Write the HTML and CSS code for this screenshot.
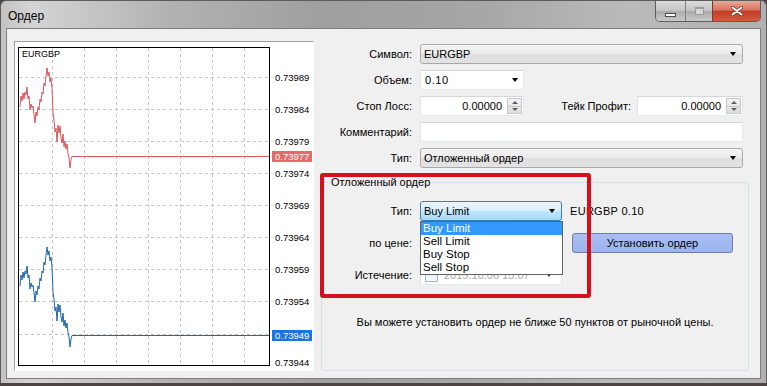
FILE: index.html
```html
<!DOCTYPE html>
<html lang="ru">
<head>
  <meta charset="UTF-8">
  <title>Ордер</title>
  <link rel="stylesheet" href="styles.css">
</head>
<body>

  <div class="window">
    <div class="titlebar">
      <span class="title">Ордер</span>
      <div class="caption-buttons">
        <span class="cap-btn cap-min"><i></i></span>
        <span class="cap-btn cap-max"><i></i></span>
        <span class="cap-btn cap-close">
          <svg width="12" height="10" viewBox="0 0 12 10">
            <path d="M1.5 1.5 L10.5 8.5 M10.5 1.5 L1.5 8.5" stroke="#6b2a1e" stroke-width="3.4" stroke-linecap="round"/>
            <path d="M1.5 1.5 L10.5 8.5 M10.5 1.5 L1.5 8.5" stroke="#fff" stroke-width="2" stroke-linecap="round"/>
          </svg>
        </span>
      </div>
    </div>

    <div class="client">
      <!-- график -->
      <div class="chart-panel">
        <svg class="chart" width="298" height="328" viewBox="15 42 298 328">
          <rect x="15" y="42" width="298" height="328" fill="#fff"/>
          <g stroke="#c4c4c4" stroke-dasharray="3 3" stroke-width="1">
            <path d="M52.5 48V366 M84.5 48V366 M116.5 48V366 M148.5 48V366 M180.5 48V366 M212.5 48V366 M244.5 48V366"/>
            <path d="M19 77.5H270 M19 109.5H270 M19 141.5H270 M19 173.5H270 M19 205.5H270 M19 237.5H270 M19 269.5H270 M19 301.5H270 M19 334.5H270"/>
          </g>
          <polyline fill="none" stroke="#d9575d" stroke-width="1"
            points="20,107 21,96 22,101 23,93 24,99 25,92 26,95 27,87 28,99 29,96 30,110 31,104 32,108 33,106 34,114 35,123 36,112 37,116 38,107 39,110 40,99 41,102 42,92 43,94 44,83 45,86 46,76 47,68 48,76 49,72 50,82 51,78 52,88 53,113 54,120 55,132 56,128 57,142 58,125 59,133 60,126 61,138 62,143 63,134 64,147 65,141 66,149 67,144 68,154 69,158 70,168 71,160 72,156.5 270,156.5"/>
          <polyline fill="none" stroke="#1f67ad" stroke-width="1"
            points="20,286 21,275 22,280 23,272 24,278 25,271 26,274 27,266 28,278 29,275 30,289 31,283 32,287 33,285 34,293 35,302 36,291 37,295 38,286 39,289 40,278 41,281 42,271 43,273 44,262 45,265 46,255 47,247 48,255 49,251 50,261 51,257 52,267 53,292 54,299 55,311 56,307 57,321 58,304 59,312 60,305 61,317 62,322 63,313 64,326 65,320 66,328 67,323 68,333 69,337 70,347 71,339 72,335.5 270,335.5"/>
          <rect x="18.5" y="47.5" width="251" height="318" fill="none" stroke="#000"/>
          <text x="22" y="57" class="chart-symbol">EURGBP</text>
          <g class="price">
            <text x="275" y="81">0.73989</text>
            <text x="275" y="113">0.73984</text>
            <text x="275" y="145">0.73979</text>
            <text x="275" y="177">0.73974</text>
            <text x="275" y="209">0.73969</text>
            <text x="275" y="241">0.73964</text>
            <text x="275" y="273">0.73959</text>
            <text x="275" y="305">0.73954</text>
            <text x="275" y="366">0.73944</text>
          </g>
          <rect x="272" y="151" width="40" height="11" fill="#e8696c"/>
          <text x="275" y="160" class="price price-tag">0.73977</text>
          <rect x="272" y="330" width="40" height="11" fill="#1c74e0"/>
          <text x="275" y="339" class="price price-tag">0.73949</text>
        </svg>
      </div>

      <!-- форма ордера -->
      <div class="order-form">
        <div class="row">
          <label>Символ:</label>
          <div class="combo">EURGBP<span class="arrow"></span></div>
        </div>
        <div class="row">
          <label>Объем:</label>
          <div class="field volume">0.10<span class="arrow"></span></div>
        </div>
        <div class="row">
          <label>Стоп Лосс:</label>
          <div class="pair">
            <div class="field num">0.00000<span class="spin"><b class="up"></b><b class="down"></b></span></div>
            <label class="tp-label">Тейк Профит:</label>
            <div class="field num tp">0.00000<span class="spin"><b class="up"></b><b class="down"></b></span></div>
          </div>
        </div>
        <div class="row">
          <label>Комментарий:</label>
          <div class="field"></div>
        </div>
        <div class="row">
          <label>Тип:</label>
          <div class="combo">Отложенный ордер<span class="arrow"></span></div>
        </div>

        <fieldset class="pending">
          <legend>Отложенный ордер</legend>
          <div class="pending-grid">
            <label>Тип:</label>
            <div class="select-wrap">
              <div class="combo focused">Buy Limit<span class="arrow"></span></div>
              <ul class="dropdown">
                <li class="selected">Buy Limit</li>
                <li>Sell Limit</li>
                <li>Buy Stop</li>
                <li>Sell Stop</li>
              </ul>
            </div>
            <span class="summary">EURGBP 0.10</span>

            <label>по цене:</label>
            <div class="field num">0.73977</div>
            <button class="btn-place">Установить ордер</button>

            <label>Истечение:</label>
            <div class="field date"><span class="check"></span>2015.10.06 15:07<span class="arrow"></span></div>
            <span></span>
          </div>
          <p class="note">Вы можете установить ордер не ближе 50 пунктов от рыночной цены.</p>
        </fieldset>
      </div>
    </div>

    <div class="highlight"></div>
  </div>

</body>
</html>
```

FILE: styles.css
```css
body {
  margin: 0;
  background: #4d4544;
  font-family: 'Liberation Sans', Arial, sans-serif;
  font-size: 11px;
  color: #000;
}
.window {
  position: relative;
  width: 767px;
  height: 383px;
  box-sizing: border-box;
  padding: 0 5px;
  border: 1px solid #5c5c5c;
  border-bottom: none;
  border-radius: 6px 6px 0 0;
  background: linear-gradient(90deg, #c2c2c2 0%, #d4d4d4 4%, #b2b2b2 22%, #9f9f9f 42%, #a6a6a6 62%, #bababa 82%, #b0b0b0 100%);
  display: flex;
  flex-direction: column;
}
.titlebar {
  height: 27px;
  display: flex;
  align-items: flex-start;
}
.title {
  font-size: 12px;
  margin: 8px 0 0 2px;
}
.caption-buttons {
  margin-left: auto;
  display: flex;
  height: 20px;
  border: 1px solid #5e5e5e;
  border-top: none;
  border-radius: 0 0 5px 5px;
  overflow: hidden;
}
.cap-btn {
  display: flex;
  align-items: center;
  justify-content: center;
  background: linear-gradient(#dcdcdc, #c4c4c4 48%, #ababab 52%, #c9c9c9);
}
.cap-min {
  width: 29px;
}
.cap-min i {
  width: 9px;
  height: 2px;
  margin-top: 7px;
  background: #fff;
  border: 1px solid #4a4a4a;
}
.cap-max {
  width: 26px;
  border-left: 1px solid #808080;
}
.cap-max i {
  width: 7px;
  height: 5px;
  border: 1px solid #9c9c9c;
  border-top-width: 2px;
  background: #d8d8d8;
}
.cap-close {
  width: 47px;
  border-left: 1px solid #7a3a2a;
  background: linear-gradient(#eaa898, #d8735e 45%, #c23d26 52%, #d35a3e);
}
.client {
  flex: 1;
  margin-bottom: 4px;
  border: 1px solid #7d7d7d;
  background: #f0f0f0;
  display: flex;
  align-items: flex-start;
}
.chart-panel {
  margin: 12px 0 0 7px;
  width: 300px;
  height: 330px;
  box-sizing: border-box;
  border: 1px solid;
  border-color: #a0a0a0 #fff #fff #a0a0a0;
  background: #fff;
}
.chart {
  display: block;
}
.chart-symbol {
  font-family: 'Liberation Sans', Arial, sans-serif;
  font-size: 9px;
}
.price {
  font-family: 'Liberation Sans', Arial, sans-serif;
  font-size: 9.5px;
  fill: #000;
}
.price-tag {
  fill: #fff;
}

.order-form {
  margin: 15px 0 0 6px;
  width: 429px;
}
.row {
  display: grid;
  grid-template-columns: 92px 323px;
  column-gap: 8px;
  align-items: center;
  height: 20px;
  margin-bottom: 6px;
}
.row:nth-child(5) {
  margin-bottom: 0;
}
label {
  text-align: right;
  white-space: nowrap;
}
.combo, .field {
  height: 20px;
  box-sizing: border-box;
  display: flex;
  align-items: center;
  white-space: nowrap;
}
.combo {
  padding: 0 6px 0 3px;
  justify-content: space-between;
  border: 1px solid #a9a9a9;
  border-radius: 3px;
  background: linear-gradient(#f4f4f4, #ececec 48%, #dedede 52%, #e3e3e3);
}
.combo.focused {
  border-color: #3c7fb1;
  background: linear-gradient(#eaf6fd, #d9f0fc 48%, #bee6fd 52%, #a7d9f5);
}
.field {
  padding: 0 4px;
  border: 1px solid;
  border-color: #d4d6da #e3e9ef #e3e9ef #e2e3ea;
  background: #fff;
}
.arrow {
  width: 0;
  height: 0;
  border-left: 3.5px solid transparent;
  border-right: 3.5px solid transparent;
  border-top: 4px solid #000;
}
.volume {
  width: 104px;
  justify-content: space-between;
  padding-right: 5px;
  letter-spacing: 0.6px;
}
.pair {
  display: flex;
  align-items: center;
}
.num {
  justify-content: flex-end;
  width: 104px;
  padding: 0 1px 0 4px;
}
.num.tp {
  width: 106px;
}
.tp-label {
  flex: 1;
  padding-right: 6px;
}
.spin {
  width: 15px;
  height: 16px;
  margin-left: 5px;
  border: 1px solid #c9c9c9;
  box-sizing: border-box;
  display: flex;
  flex-direction: column;
  background: linear-gradient(#f3f3f3, #dcdcdc);
}
.spin b {
  flex: 1;
  display: flex;
  align-items: center;
  justify-content: center;
}
.spin b::after {
  content: '';
  border-left: 3px solid transparent;
  border-right: 3px solid transparent;
}
.spin .up {
  border-bottom: 1px solid #c9c9c9;
}
.spin .up::after {
  border-bottom: 3px solid #5c5c5c;
}
.spin .down::after {
  border-top: 3px solid #5c5c5c;
}

.pending {
  margin: 8px 0 0 1px;
  padding: 0;
  height: 195px;
  box-sizing: border-box;
  border: 1px solid #d5dfe5;
  border-radius: 3px;
}
.pending legend {
  margin-left: 8px;
  padding: 0 1px;
  line-height: 13px;
}
.pending-grid {
  display: grid;
  grid-template-columns: 90px 142px 1fr;
  grid-auto-rows: 20px;
  column-gap: 8px;
  row-gap: 12px;
  align-items: center;
  margin-top: 12px;
}
.select-wrap {
  position: relative;
}
.dropdown {
  position: absolute;
  top: 20px;
  left: 0;
  width: 143px;
  margin: 0;
  padding: 0;
  list-style: none;
  box-sizing: border-box;
  border: 1px solid #646464;
  background: #fff;
  font-size: 11.5px;
  z-index: 2;
}
.dropdown li {
  height: 13px;
  line-height: 13px;
  padding-left: 2px;
}
.dropdown .selected {
  background: #3399ff;
  color: #fff;
}
.summary {
  letter-spacing: 0.3px;
}
.btn-place {
  width: 161px;
  height: 20px;
  margin-left: 2px;
  border: 1px solid #6e7ea6;
  border-radius: 3px;
  background: linear-gradient(#a9bff3, #9bb4ef);
  font-family: inherit;
  font-size: 11px;
  padding: 0;
}
.date {
  color: #a8a8a8;
  padding-right: 9px;
}
.date .check {
  width: 11px;
  height: 11px;
  margin-right: 6px;
  border: 1px solid #a7b3c3;
  background: linear-gradient(#e6ecf3, #f6f8fa);
}
.date .arrow {
  margin-left: auto;
  border-top-color: #333;
}
.note {
  margin: 30px 0 0;
  text-align: center;
  line-height: 14px;
}
.highlight {
  position: absolute;
  left: 319px;
  top: 172px;
  width: 271px;
  height: 125px;
  box-sizing: border-box;
  border: 4px solid #d4101c;
  border-radius: 3px;
}
```
